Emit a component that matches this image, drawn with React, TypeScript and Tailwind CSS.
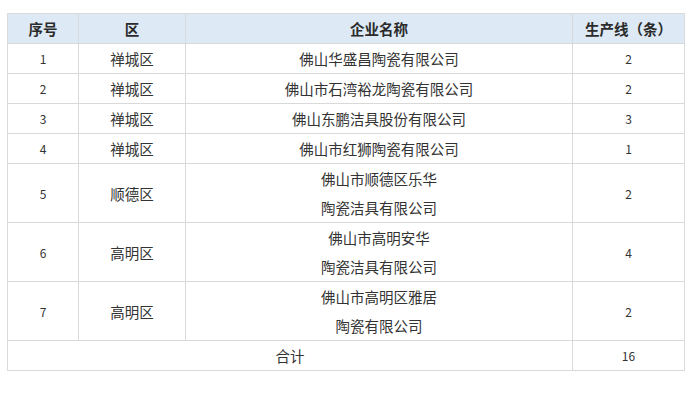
const ROWS: { no: string; district: string; name: string[]; lines: string }[] = [
  { no: "1", district: "禅城区", name: ["佛山华盛昌陶瓷有限公司"], lines: "2" },
  { no: "2", district: "禅城区", name: ["佛山市石湾裕龙陶瓷有限公司"], lines: "2" },
  { no: "3", district: "禅城区", name: ["佛山东鹏洁具股份有限公司"], lines: "3" },
  { no: "4", district: "禅城区", name: ["佛山市红狮陶瓷有限公司"], lines: "1" },
  { no: "5", district: "顺德区", name: ["佛山市顺德区乐华", "陶瓷洁具有限公司"], lines: "2" },
  { no: "6", district: "高明区", name: ["佛山市高明安华", "陶瓷洁具有限公司"], lines: "4" },
  { no: "7", district: "高明区", name: ["佛山市高明区雅居", "陶瓷有限公司"], lines: "2" },
];

const cell = "border border-[#d9d9d9] text-center align-middle p-0 leading-[29px]";
const num = "text-[12px]";

export default function App() {
  return (
    <div className="w-[695px] h-[395px] bg-white pt-[13px] pl-[7px] font-['Noto_Sans_CJK_SC',sans-serif] text-[14.5px] text-[#333]">
      <table className="table-fixed border-collapse w-[677px]">
        <colgroup>
          <col className="w-[71px]" />
          <col className="w-[107px]" />
          <col className="w-[387px]" />
          <col className="w-[112px]" />
        </colgroup>
        <thead>
          <tr className="bg-[#dde9f5] h-[30px]">
            <th className={`${cell} font-bold text-[#2b2b2b]`}>序号</th>
            <th className={`${cell} font-bold text-[#2b2b2b]`}>区</th>
            <th className={`${cell} font-bold text-[#2b2b2b]`}>企业名称</th>
            <th className={`${cell} font-bold text-[#2b2b2b]`}>生产线（条）</th>
          </tr>
        </thead>
        <tbody>
          {ROWS.map((r) => (
            <tr key={r.no} className="h-[30px]">
              <td className={`${cell} ${num}`}>{r.no}</td>
              <td className={cell}>{r.district}</td>
              <td className={cell}>
                {r.name.map((n) => (
                  <div key={n}>{n}</div>
                ))}
              </td>
              <td className={`${cell} ${num}`}>{r.lines}</td>
            </tr>
          ))}
          <tr className="h-[30px]">
            <td className={cell} colSpan={3}>合计</td>
            <td className={`${cell} ${num}`}>16</td>
          </tr>
        </tbody>
      </table>
    </div>
  );
}
